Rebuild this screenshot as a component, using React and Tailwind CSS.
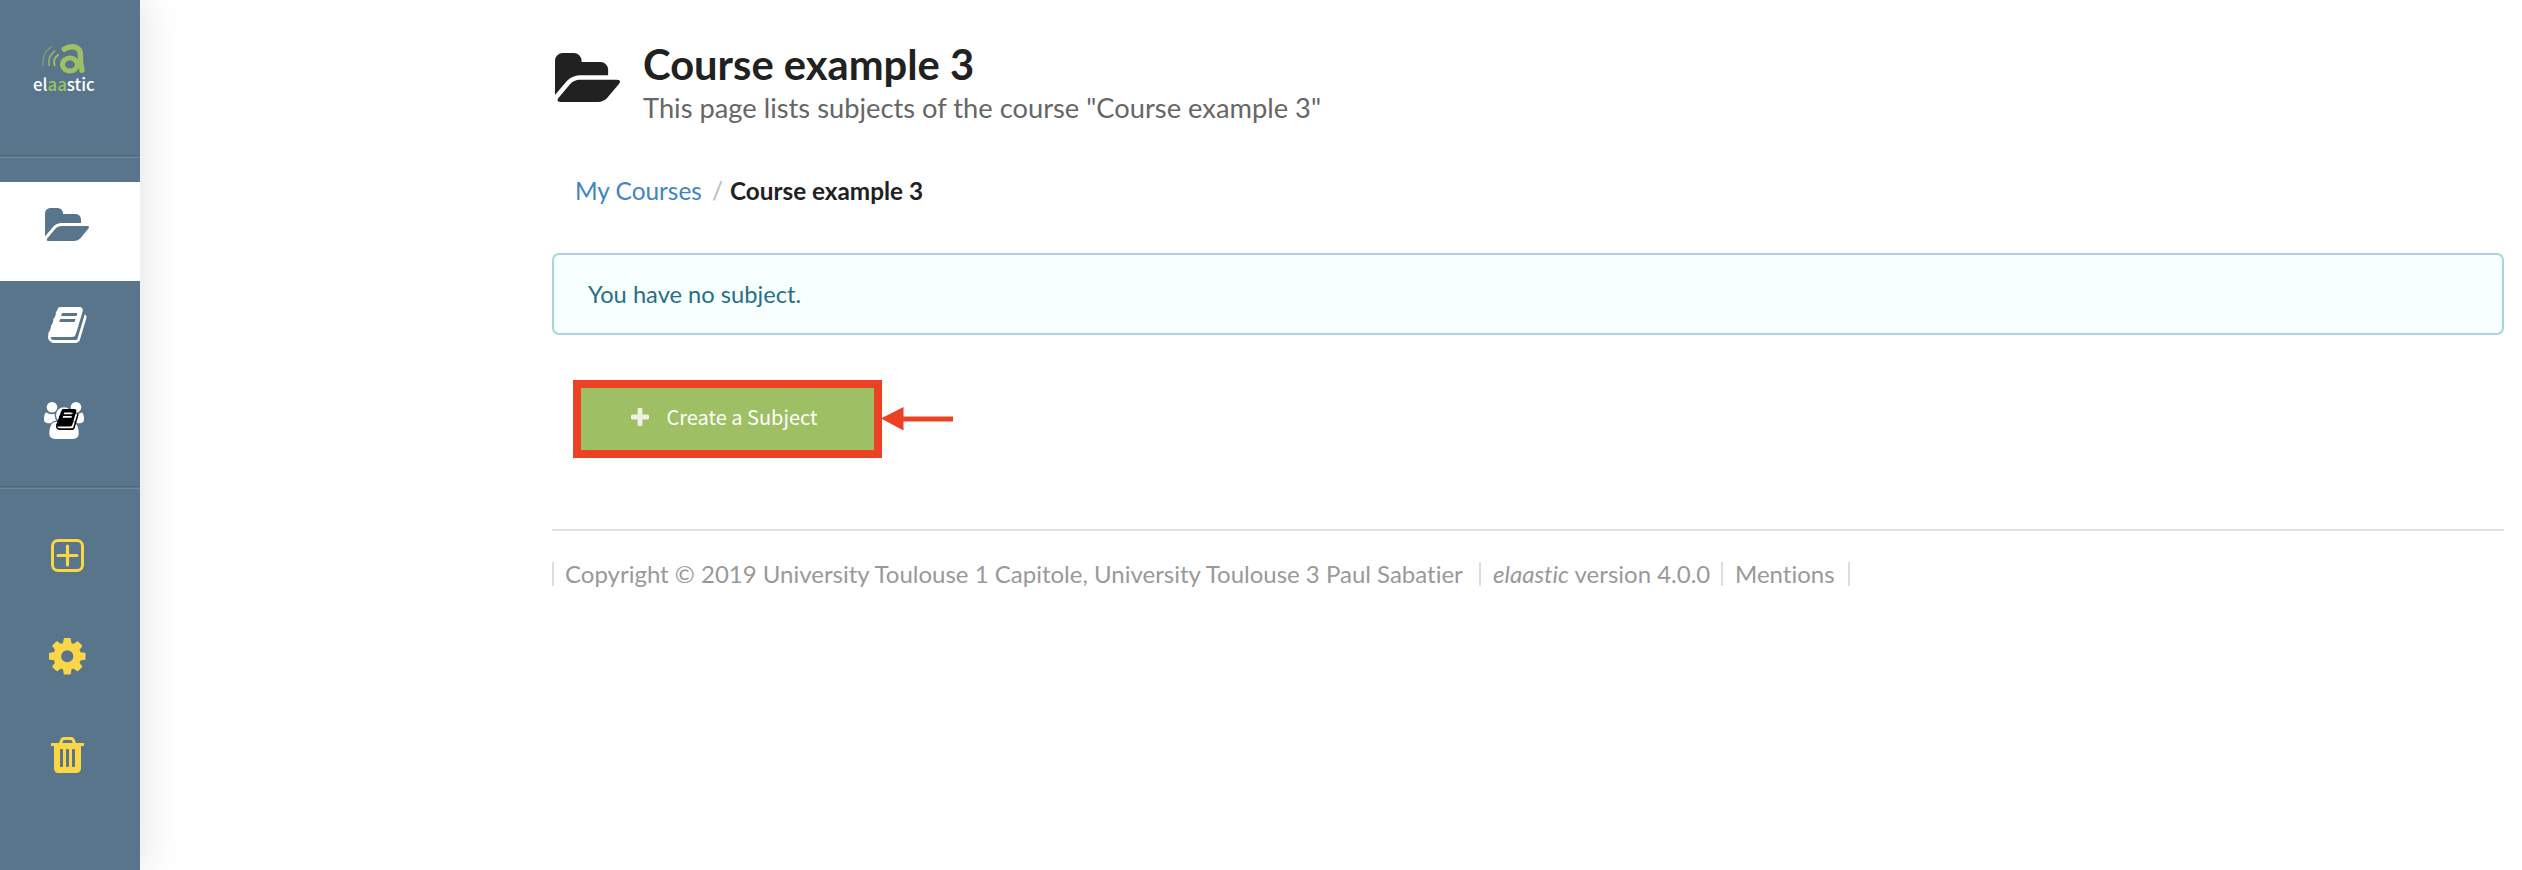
const FOLDER_OPEN =
  "M1879 952q0 31-31 66l-336 396q-43 51-120.500 86.500t-143.500 35.500h-1088q-34 0-60.500-13t-26.500-43q0-31 31-66l336-396q43-51 120.500-86.500t143.500-35.500h1088q34 0 60.500 13t26.500 43zm-343-344v160h-832q-94 0-197 47.500t-164 119.500l-337 396-5 6q0-4-.5-12.500t-.5-12.500v-960q0-92 66-158t158-66h320q92 0 158 66t66 158v32h544q92 0 158 66t66 158z";
const BOOK =
  "M1703 478q40 57 18 129l-275 906q-19 64-76.500 107.500t-122.500 43.500h-923q-77 0-148.500-53.500t-99.500-131.500q-24-67-2-127 0-4 3-27t4-37q1-8-3-21.500t-3-19.500q2-11 8-21t16.500-23.500 16.500-23.500q23-38 45-91.500t30-91.500q3-10 .5-30t-.5-28q3-11 17-28t17-23q21-36 42-92t25-90q1-9-2.500-32t.5-28q4-13 22-30.500t22-22.500q19-26 42.500-84.500t27.500-96.500q1-8-3-25.500t-2-26.500q2-8 9-18t18-23 17-21q8-12 16.500-30.500t15-35 16-36 19.500-32 26.500-23.500 36-11.500 47.500 5.500l-1 3q38-9 51-9h761q74 0 114 56t18 130l-274 906q-36 119-71.500 153.500t-128.500 34.500h-869q-27 0-38 15-11 16-1 43 24 70 144 70h923q29 0 56-15.500t35-41.500l300-987q7-22 5-57 38 15 59 43zm-1064 2q-4 13 2 22.500t20 9.500h608q13 0 25.500-9.500t16.500-22.500l21-64q4-13-2-22.500t-20-9.500h-608q-13 0-25.500 9.500t-16.500 22.500zm-83 256q-4 13 2 22.500t20 9.500h608q13 0 25.500-9.500t16.500-22.500l21-64q4-13-2-22.500t-20-9.500h-608q-13 0-25.500 9.500t-16.500 22.500z";
const USERS =
  "M593 896q-162 5-265 128h-134q-82 0-138-40.500t-56-118.500q0-353 124-353 6 0 43.500 21t97.500 42.500 119 21.500q67 0 133-23-5 37-5 66 0 139 81 256zm1071 637q0 120-73 189.500t-194 69.500h-874q-121 0-194-69.500t-73-189.500q0-53 3.500-103.500t14-109 26.500-108.500 43-97.500 62-81 85.500-53.500 111.500-20q10 0 43 21.500t73 48 107 48 135 21.500 135-21.500 107-48 73-48 43-21.500q61 0 111.500 20t85.500 53.500 62 81 43 97.500 26.500 108.500 14 109 3.500 103.500zm-1024-1277q0 106-75 181t-181 75-181-75-75-181 75-181 181-75 181 75 75 181zm704 384q0 159-112.500 271.500t-271.500 112.500-271.500-112.500-112.500-271.500 112.500-271.500 271.500-112.500 271.500 112.500 112.500 271.500zm576 225q0 78-56 118.500t-138 40.500h-134q-103-123-265-128 81-117 81-256 0-29-5-66 66 23 133 23 59 0 119-21.500t97.500-42.500 43.500-21q124 0 124 353zm-128-609q0 106-75 181t-181 75-181-75-75-181 75-181 181-75 181 75 75 181z";
const COG =
  "M1152 896q0-106-75-181t-181-75-181 75-75 181 75 181 181 75 181-75 75-181zm512-109v222q0 12-8 23t-20 13l-185 28q-19 54-39 91 35 50 107 138 10 12 10 25t-9 23q-27 37-99 108t-94 71q-12 0-26-9l-138-108q-44 23-91 38-16 136-29 186-7 28-36 28h-222q-14 0-24.500-8.500t-11.500-21.500l-28-184q-49-16-90-37l-141 107q-10 9-25 9-14 0-25-11-126-114-165-168-7-10-7-23 0-12 8-23 15-21 51-66.500t54-70.500q-27-50-41-99l-183-27q-13-2-21-12.500t-8-23.500v-222q0-12 8-23t19-13l186-28q14-46 39-92-40-57-107-138-10-12-10-24 0-10 9-23 26-36 98.500-107.500t94.500-71.500q13 0 26 10l138 107q44-23 91-38 16-136 29-186 7-28 36-28h222q14 0 24.500 8.500t11.500 21.500l28 184q49 16 90 37l142-107q9-9 24-9 13 0 25 10 129 119 165 170 7 8 7 22 0 12-8 23-15 21-51 66.500t-54 70.500q26 50 41 98l183 28q13 2 21 12.500t8 23.500z";
const TRASH =
  "M704 1376v-704q0-14-9-23t-23-9h-64q-14 0-23 9t-9 23v704q0 14 9 23t23 9h64q14 0 23-9t9-23zm256 0v-704q0-14-9-23t-23-9h-64q-14 0-23 9t-9 23v704q0 14 9 23t23 9h64q14 0 23-9t9-23zm256 0v-704q0-14-9-23t-23-9h-64q-14 0-23 9t-9 23v704q0 14 9 23t23 9h64q14 0 23-9t9-23zm-544-992h448l-48-117q-7-9-17-11h-317q-10 2-17 11zm928 32v64q0 14-9 23t-23 9h-96v948q0 83-47 143.500t-113 60.500h-832q-66 0-113-58.500t-47-141.500v-952h-96q-14 0-23-9t-9-23v-64q0-14 9-23t23-9h309l70-167q15-37 54-63t79-26h320q40 0 79 26t54 63l70 167h309q14 0 23 9t9 23z";
const PLUS =
  "M1600 736v192q0 40-28 68t-68 28h-416v416q0 40-28 68t-68 28h-192q-40 0-68-28t-28-68v-416h-416q-40 0-68-28t-28-68v-192q0-40 28-68t68-28h416v-416q0-40 28-68t68-28h192q40 0 68 28t28 68v416h416q40 0 68 28t28 68z";

function Glyph({ d, box, className }) {
  return (
    <svg viewBox={box} preserveAspectRatio="none" fill="currentColor" className={className} aria-hidden="true">
      <path d={d} />
    </svg>
  );
}

function Logo() {
  return (
    <div className="flex h-[155px] flex-col items-start pt-[43px] pl-[33px]">
      <svg viewBox="40 43 48 32" className="ml-[7px] h-8 w-12 shrink-0" fill="none" stroke="#9ebf63" aria-hidden="true">
        <g strokeWidth="1.9" strokeLinecap="round">
          <path d="M50.800 47C45.500 51 42.300 57.500 43.200 65" opacity=".4" />
          <path d="M54.600 51.200C50.200 54.500 48 59.500 49.200 65.300" opacity=".75" />
          <path d="M58.300 54.800C55 57 53.200 61 54.600 65.500" />
        </g>
        <path d="M64.200 49.300C67 47.300 69.500 46.700 72 46.700C77.500 46.700 80.500 50 80.500 55V61C80.500 66 82 67 82 70.300" strokeWidth="5.400" strokeLinecap="round" />
        <ellipse cx="69.900" cy="64.600" rx="7.500" ry="6.500" strokeWidth="5" />
      </svg>
      <div className="-mt-[3px] font-['Noto_Sans_CJK_SC',sans-serif] text-[16.800px] leading-[24px] font-medium text-white">
        el<span className="text-[#9ebf63]">aa</span>stic
      </div>
    </div>
  );
}

function Separator() {
  return <div className="h-[3px] border-t border-b border-t-[#4c6679] border-b-[#6f899c]" />;
}

function Sidebar() {
  return (
    <aside className="flex w-[140px] shrink-0 flex-col bg-[#58758c] shadow-[0_0_40px_rgba(34,36,38,0.15)]">
      <Logo />
      <Separator />
      <nav className="flex h-[328px] flex-col pt-6">
        <div className="flex h-[99px] items-start bg-white pt-[26px] pl-[45px] text-[#58758c]">
          <Glyph d={FOLDER_OPEN} box="0 128 1879 1408" className="h-[33px] w-11" />
        </div>
        <div className="flex h-[96px] items-start pt-[26px] pl-12 text-white">
          <Glyph d={BOOK} box="64 128 1664 1536" className="h-9 w-[38.500px]" />
        </div>
        <div className="relative flex h-[96px] items-start pt-[25px] pl-11 text-white">
          <Glyph d={USERS} box="0 0 1920 1792" className="h-[37px] w-10" />
          <Glyph d={BOOK} box="64 128 1664 1536" className="absolute top-[32px] left-[56px] h-[21px] w-[22.500px] text-black" />
        </div>
      </nav>
      <Separator />
      <nav className="flex flex-col text-[#fbd646]">
        <div className="flex h-[99px] items-start pt-[50px] pl-[51px]">
          <svg viewBox="0 0 33 33" className="size-[33px]" fill="none" stroke="currentColor" aria-hidden="true">
            <rect x="1.500" y="1.500" width="30" height="30" rx="5.500" strokeWidth="3" />
            <path d="M7 16.500H26M16.500 7V26" strokeWidth="3.200" strokeLinecap="round" />
          </svg>
        </div>
        <div className="flex h-[99px] items-start pt-[50px] pl-[49px]">
          <Glyph d={COG} box="128 128 1536 1536" className="size-[36.500px]" />
        </div>
        <div className="flex h-[99px] items-start pt-[50px] pl-[51px]">
          <Glyph d={TRASH} box="192 128 1408 1536" className="h-9 w-[33px]" />
        </div>
      </nav>
    </aside>
  );
}

export default function App() {
  return (
    <div className="flex h-[870px] w-[2522px] overflow-hidden bg-white font-['Lato',sans-serif] [font-variant-ligatures:none]">
      <Sidebar />
      <main className="mr-[18px] ml-[412px] flex grow flex-col pt-10">
        <header className="flex">
          <Glyph d={FOLDER_OPEN} box="0 128 1879 1408" className="mt-[13px] ml-[3px] h-[49px] w-[65px] text-[#212121]" />
          <div className="ml-[23px]">
            <h1 className="text-[41.700px] leading-[48px] font-bold text-[#212121]">Course example 3</h1>
            <p className="mt-[3px] text-[27.300px] leading-[34px] text-[#666]">
              This page lists subjects of the course "Course example 3"
            </p>
          </div>
        </header>

        <nav className="mt-12 flex pl-[23px] text-[24.400px] leading-9">
          <a className="w-[137px] text-[#4183c4]">My Courses</a>
          <span className="w-[18px] text-[#bbb]">/</span>
          <span className="text-[24.300px] font-bold text-[#212121]">Course example 3</span>
        </nav>

        <div className="mt-[44px] flex h-[82px] items-center rounded-[7px] border-2 border-[#a9d5de] bg-[#f8ffff] pl-[34px] text-[23.700px] leading-9 text-[#276f86]">
          You have no subject.
        </div>

        <div className="mt-[45px] flex items-center pl-[21px]">
          <button className="flex h-[78px] w-[309px] items-center border-8 border-[#ec4125] bg-[#9ebf63] pb-[5px] pl-[50px] font-['Noto_Sans_CJK_SC',sans-serif] text-xl leading-[30px] text-white">
            <Glyph d={PLUS} box="192 128 1408 1408" className="size-[18px] opacity-80" />
            <span className="ml-[17.500px]">Create a Subject</span>
          </button>
          <svg viewBox="0 0 72 24" className="-ml-px h-6 w-[72px]" fill="#ec4125" aria-hidden="true">
            <path d="M0 11.500L22.500 0V9.500H72V14.500H22.500V23.500Z" />
          </svg>
        </div>

        <hr className="mt-[71px] border-t-2 border-[#e0e1e1]" />

        <footer className="mt-[31px] flex text-2xl leading-6 whitespace-nowrap text-[#999]">
          <span className="h-6 w-[927px] border-l-2 border-[#dedede] pl-[11px]">
            Copyright © 2019 University Toulouse 1 Capitole, University Toulouse 3 Paul Sabatier
          </span>
          <span className="h-6 w-[242px] border-l-2 border-[#dedede] pl-[12px]">
            <em>elaastic</em> version 4.0.0
          </span>
          <span className="h-6 w-[129px] border-x-2 border-[#dedede] pl-[12px]">Mentions</span>
        </footer>
      </main>
    </div>
  );
}
